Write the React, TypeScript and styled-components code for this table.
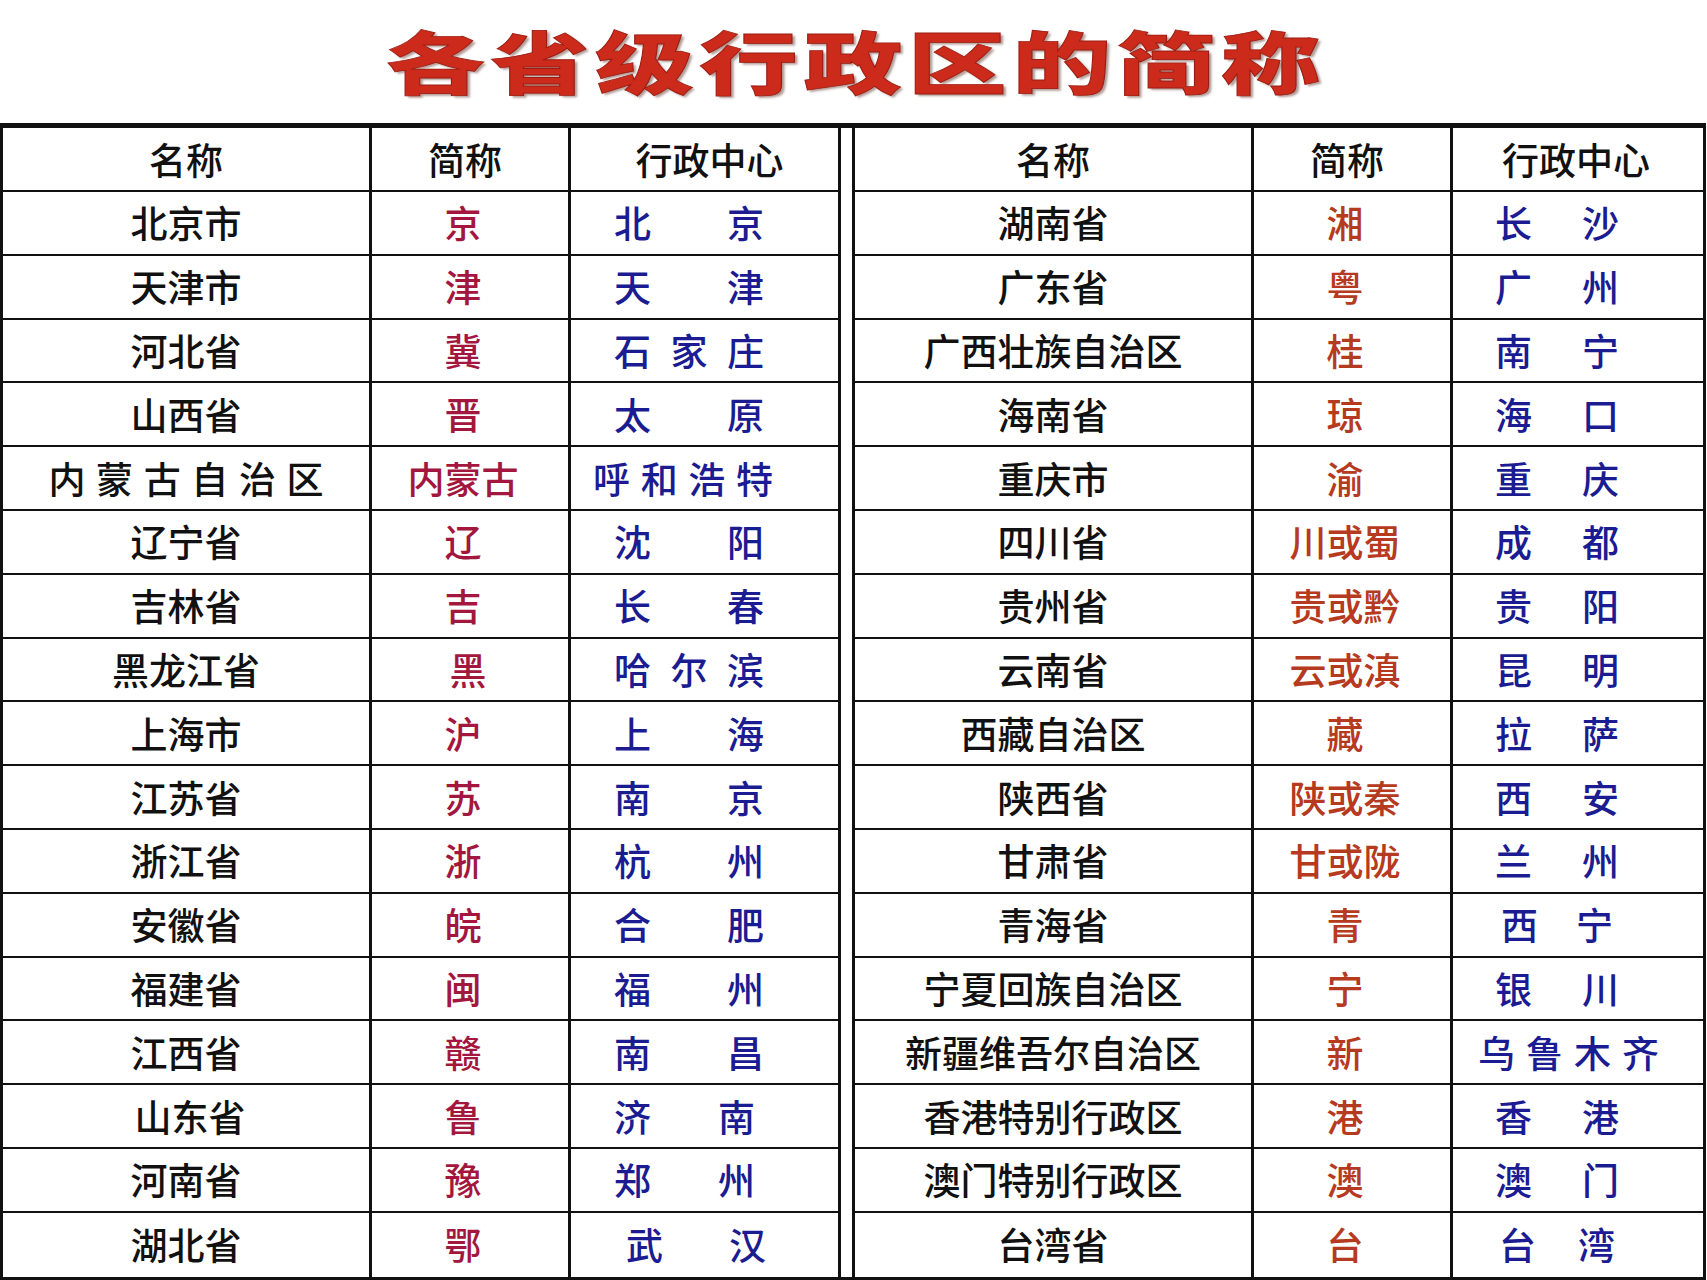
import React from "react";
import styled, { createGlobalStyle } from "styled-components";

const GlobalStyle = createGlobalStyle`
  html, body {
    margin: 0;
    padding: 0;
    background: #ffffff;
  }
  body {
    font-family: "Noto Sans CJK SC", "Noto Sans", sans-serif;
  }
`;

const Page = styled.div`
  width: 1707px;
  height: 1280px;
  overflow: hidden;
  background: #ffffff;
  display: flex;
  flex-direction: column;
`;

const TitleBar = styled.header`
  height: 123px;
  display: flex;
  align-items: center;
  justify-content: center;
  padding-bottom: 3px;
  box-sizing: border-box;
`;

const TitleText = styled.h1`
  margin: 0;
  padding-left: 4px;
  display: inline-block;
  font-family: "Noto Sans CJK SC", sans-serif;
  font-weight: 900;
  font-size: 68px;
  letter-spacing: 4px;
  line-height: 1;
  color: #cc2a1a;
  transform: scaleX(1.45);
  -webkit-text-stroke: 0.8px #9a1c12;
  text-shadow: 2px 2px 2px rgba(80, 30, 20, 0.45);
`;

const Table = styled.div`
  width: 1706px;
  border-top: 5px solid #111;
  border-bottom: 3px solid #111;
  border-left: 3px solid #111;
  border-right: 3px solid #111;
  box-sizing: border-box;
  display: flex;
  flex-direction: column;
`;

const Row = styled.div<{ $h: number; $last?: boolean }>`
  display: grid;
  grid-template-columns: 369px 199px 270px 11px 402px 199px 250px;
  height: ${(p) => p.$h}px;
  & > * {
    border-bottom: ${(p) => (p.$last ? "0" : "2.5px solid #111")};
  }
`;

const Cell = styled.div<{ $side?: "left" | "right"; $end?: boolean }>`
  box-sizing: border-box;
  display: flex;
  align-items: center;
  font-size: 37px;
  font-weight: 500;
  line-height: 1;
  white-space: nowrap;
  border-right: ${(p) => (p.$end ? "0" : "3px solid #111")};
  border-left: ${(p) => (p.$side === "right" ? "3px solid #111" : "0")};
`;

const HeadCell = styled(Cell)<{ $dx?: number }>`
  justify-content: center;
  color: #111;
  padding-left: ${(p) => ((p.$dx ?? 0) > 0 ? p.$dx : 0)}px;
  padding-right: ${(p) => ((p.$dx ?? 0) < 0 ? -(p.$dx as number) : 0)}px;
`;

const NameCell = styled(Cell)<{ $dx?: number }>`
  justify-content: center;
  color: #111;
  padding-left: ${(p) => ((p.$dx ?? 0) > 0 ? p.$dx : 0)}px;
  padding-right: ${(p) => ((p.$dx ?? 0) < 0 ? -(p.$dx as number) : 0)}px;
`;

const AbbrCell = styled(Cell)<{ $color: string; $dx?: number }>`
  justify-content: center;
  color: ${(p) => p.$color};
  padding-right: ${(p) => 14 - (p.$dx ?? 0)}px;
`;

const CapCell = styled(Cell)<{ $pad: number }>`
  justify-content: flex-start;
  color: #1b1b92;
  padding-left: ${(p) => p.$pad}px;
`;

const Spread = styled.span<{ $w: number }>`
  display: flex;
  justify-content: space-between;
  width: ${(p) => p.$w}px;
`;

const Gap = styled.div`
  border-bottom: 0 !important;
`;

type Entry = {
  name: string;
  abbr: string;
  cap: string;
  nameW?: number;
  nameDx?: number;
  abbrDx?: number;
  capPad?: number;
  capW?: number;
};

const leftData: Entry[] = [
  { name: "北京市", abbr: "京", cap: "北京" },
  { name: "天津市", abbr: "津", cap: "天津" },
  { name: "河北省", abbr: "冀", cap: "石家庄" },
  { name: "山西省", abbr: "晋", cap: "太原" },
  { name: "内蒙古自治区", abbr: "内蒙古", cap: "呼和浩特", nameW: 275, capPad: 22, capW: 180 },
  { name: "辽宁省", abbr: "辽", cap: "沈阳" },
  { name: "吉林省", abbr: "吉", cap: "长春" },
  { name: "黑龙江省", abbr: "黑", cap: "哈尔滨", abbrDx: 10 },
  { name: "上海市", abbr: "沪", cap: "上海" },
  { name: "江苏省", abbr: "苏", cap: "南京" },
  { name: "浙江省", abbr: "浙", cap: "杭州" },
  { name: "安徽省", abbr: "皖", cap: "合肥" },
  { name: "福建省", abbr: "闽", cap: "福州" },
  { name: "江西省", abbr: "赣", cap: "南昌" },
  { name: "山东省", abbr: "鲁", cap: "济南", nameDx: 8, capW: 141 },
  { name: "河南省", abbr: "豫", cap: "郑州", capW: 141 },
  { name: "湖北省", abbr: "鄂", cap: "武汉", capPad: 55, capW: 140 },
];

const rightData: Entry[] = [
  { name: "湖南省", abbr: "湘", cap: "长沙" },
  { name: "广东省", abbr: "粤", cap: "广州" },
  { name: "广西壮族自治区", abbr: "桂", cap: "南宁" },
  { name: "海南省", abbr: "琼", cap: "海口" },
  { name: "重庆市", abbr: "渝", cap: "重庆" },
  { name: "四川省", abbr: "川或蜀", cap: "成都" },
  { name: "贵州省", abbr: "贵或黔", cap: "贵阳" },
  { name: "云南省", abbr: "云或滇", cap: "昆明" },
  { name: "西藏自治区", abbr: "藏", cap: "拉萨" },
  { name: "陕西省", abbr: "陕或秦", cap: "西安" },
  { name: "甘肃省", abbr: "甘或陇", cap: "兰州" },
  { name: "青海省", abbr: "青", cap: "西宁", capPad: 48, capW: 112 },
  { name: "宁夏回族自治区", abbr: "宁", cap: "银川" },
  { name: "新疆维吾尔自治区", abbr: "新", cap: "乌鲁木齐", capPad: 25, capW: 181 },
  { name: "香港特别行政区", abbr: "港", cap: "香港" },
  { name: "澳门特别行政区", abbr: "澳", cap: "澳门" },
  { name: "台湾省", abbr: "台", cap: "台湾", capPad: 46, capW: 116 },
];

const LEFT_ABBR = "#a3173f";
const RIGHT_ABBR = "#b53a20";

const Chars: React.FC<{ text: string; w: number }> = ({ text, w }) => (
  <Spread $w={w}>
    {Array.from(text).map((c, i) => (
      <span key={i}>{c}</span>
    ))}
  </Spread>
);

const HEAD_H = 64;
const ROW_H = 63.8;

export default function App() {
  return (
    <>
      <GlobalStyle />
      <Page>
        <TitleBar>
          <TitleText>各省级行政区的简称</TitleText>
        </TitleBar>
        <Table>
          <Row $h={HEAD_H}>
            <HeadCell>名称</HeadCell>
            <HeadCell $dx={-10}>简称</HeadCell>
            <HeadCell $dx={10}>行政中心</HeadCell>
            <Gap />
            <HeadCell $side="right">名称</HeadCell>
            <HeadCell $dx={-10}>简称</HeadCell>
            <HeadCell $end $dx={-4}>行政中心</HeadCell>
          </Row>
          {leftData.map((l, i) => {
            const r = rightData[i];
            const last = i === leftData.length - 1;
            return (
              <Row key={l.name} $h={ROW_H} $last={last}>
                <NameCell $dx={l.nameDx}>
                  {l.nameW ? <Chars text={l.name} w={l.nameW} /> : l.name}
                </NameCell>
                <AbbrCell $color={LEFT_ABBR} $dx={l.abbrDx}>
                  {l.abbr}
                </AbbrCell>
                <CapCell $pad={l.capPad ?? 43}>
                  <Chars text={l.cap} w={l.capW ?? 150} />
                </CapCell>
                <Gap />
                <NameCell $side="right" $dx={r.nameDx}>
                  {r.nameW ? <Chars text={r.name} w={r.nameW} /> : r.name}
                </NameCell>
                <AbbrCell $color={RIGHT_ABBR} $dx={r.abbrDx}>
                  {r.abbr}
                </AbbrCell>
                <CapCell $end $pad={r.capPad ?? 42}>
                  <Chars text={r.cap} w={r.capW ?? 124} />
                </CapCell>
              </Row>
            );
          })}
        </Table>
      </Page>
    </>
  );
}
